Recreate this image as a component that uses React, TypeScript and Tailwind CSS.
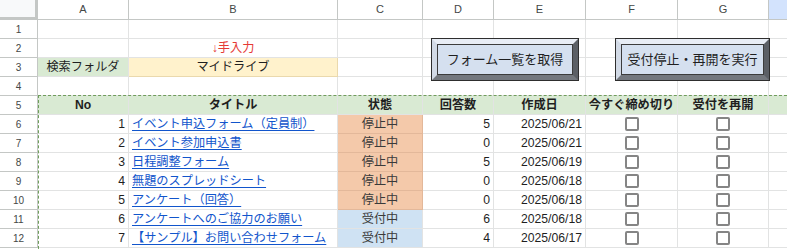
import React from 'react';

const font = "font-['Liberation_Sans','Noto_Sans_CJK_JP',sans-serif]";
const cols = 'grid grid-cols-[38px_91px_209px_85px_71px_92px_92px_91px_1fr]';

type Row = { no: number; title: string; status: '停止中' | '受付中'; count: number; date: string };

const rows: Row[] = [
  { no: 1, title: 'イベント申込フォーム（定員制）', status: '停止中', count: 5, date: '2025/06/21' },
  { no: 2, title: 'イベント参加申込書', status: '停止中', count: 0, date: '2025/06/21' },
  { no: 3, title: '日程調整フォーム', status: '停止中', count: 5, date: '2025/06/19' },
  { no: 4, title: '無題のスプレッドシート', status: '停止中', count: 0, date: '2025/06/18' },
  { no: 5, title: 'アンケート（回答）', status: '停止中', count: 0, date: '2025/06/18' },
  { no: 6, title: 'アンケートへのご協力のお願い', status: '受付中', count: 6, date: '2025/06/18' },
  { no: 7, title: '【サンプル】お問い合わせフォーム', status: '受付中', count: 4, date: '2025/06/17' },
];

function Cell({ className = '', children }: { className?: string; children?: React.ReactNode }) {
  return (
    <div
      className={`h-[19px] border-r border-b border-[#e2e3e3] flex items-center overflow-hidden whitespace-nowrap px-[3px] ${className}`}
    >
      {children}
    </div>
  );
}

function RowNum({ n }: { n: number }) {
  return (
    <div className="h-[19px] border-r border-b border-[#c4c7c5] flex items-center justify-center text-[10px] text-[#444746]">
      {n}
    </div>
  );
}

function Check() {
  return <span className="block w-[14px] h-[14px] rounded-[2px] border-2 border-[#858585] bg-white" />;
}

function BevelButton({ label, className }: { label: string; className: string }) {
  return (
    <div className={`absolute h-[43px] border border-[#2e2e2e] ${className}`}>
      <div className="h-full border-[5px] border-t-[#e8edf5] border-l-[#d2dae6] border-b-[#74787e] border-r-[#5b5f65]">
        <div className="h-full border border-[#3c3c3c] bg-[#d5e0ef] flex items-center justify-center text-[13px] text-[#1f1f1f]">
          {label}
        </div>
      </div>
    </div>
  );
}

export default function App() {
  return (
    <div className={`relative w-[787px] h-[249px] overflow-hidden bg-white text-[12.2px] text-[#1f1f1f] ${font}`}>
      {/* column headers */}
      <div className={`${cols} h-[20px]`}>
        <div className="h-[20px] bg-[#f8f9fa] border-r-[3px] border-b-[3px] border-[#c4c7c5]" />
        {['A', 'B', 'C', 'D', 'E', 'F', 'G'].map((c) => (
          <div
            key={c}
            className="h-[20px] border-r border-b border-[#c4c7c5] flex items-center justify-center text-[11px] text-[#444746]"
          >
            {c}
          </div>
        ))}
        <div className="h-[20px] border-b border-[#c4c7c5] bg-[#d3e3fd]" />
      </div>

      {/* row 1 */}
      <div className={cols}>
        <RowNum n={1} />
        <Cell />
        <Cell />
        <Cell />
        <Cell />
        <Cell />
        <Cell />
        <Cell />
        <Cell className="border-r-0" />
      </div>

      {/* row 2 */}
      <div className={cols}>
        <RowNum n={2} />
        <Cell />
        <Cell className="justify-center text-[#e53935]">↓手入力</Cell>
        <Cell />
        <Cell />
        <Cell />
        <Cell />
        <Cell />
        <Cell className="border-r-0" />
      </div>

      {/* row 3 */}
      <div className={cols}>
        <RowNum n={3} />
        <Cell className="justify-center bg-[#d9ead3]">検索フォルダ</Cell>
        <Cell className="justify-center bg-[#fff2cc] border-[#ead9ad]">マイドライブ</Cell>
        <Cell />
        <Cell />
        <Cell />
        <Cell />
        <Cell />
        <Cell className="border-r-0" />
      </div>

      {/* row 4 */}
      <div className={cols}>
        <RowNum n={4} />
        <Cell />
        <Cell />
        <Cell />
        <Cell />
        <Cell />
        <Cell />
        <Cell />
        <Cell className="border-r-0" />
      </div>

      {/* row 5 — table header */}
      <div className={cols}>
        <RowNum n={5} />
        {['No', 'タイトル', '状態', '回答数', '作成日', '今すぐ締め切り', '受付を再開'].map((h) => (
          <Cell key={h} className="justify-center font-bold bg-[#d9ead3] border-[#c9dcc2]">
            {h}
          </Cell>
        ))}
        <Cell className="bg-[#d9ead3] border-r-0 border-[#c9dcc2]" />
      </div>

      {rows.map((r, i) => (
        <div key={r.no} className={cols}>
          <RowNum n={i + 6} />
          <Cell className="justify-end">{r.no}</Cell>
          <Cell>
            <span className="text-[#1155cc] underline underline-offset-2">{r.title}</span>
          </Cell>
          <Cell
            className={
              r.status === '停止中'
                ? 'justify-center bg-[#f4c9aa] border-[#e3b89a] text-[#3a3a3a]'
                : 'justify-center bg-[#cfe2f3] border-[#bcd3e8] text-[#3a3a3a]'
            }
          >
            {r.status}
          </Cell>
          <Cell className="justify-end">{r.count}</Cell>
          <Cell className="justify-end">{r.date}</Cell>
          <Cell className="justify-center">
            <Check />
          </Cell>
          <Cell className="justify-center">
            <Check />
          </Cell>
          <Cell className="border-r-0" />
        </div>
      ))}

      {/* copy-range marker */}
      <div className="absolute left-[38px] top-[95px] -right-[10px] -bottom-[10px] border-t-[1.5px] border-l-[1.5px] border-dashed border-[#6f9e5b] pointer-events-none" />

      <BevelButton label="フォーム一覧を取得" className="left-[431px] top-[38px] w-[148px]" />
      <BevelButton label="受付停止・再開を実行" className="left-[615px] top-[38px] w-[155px]" />
    </div>
  );
}
